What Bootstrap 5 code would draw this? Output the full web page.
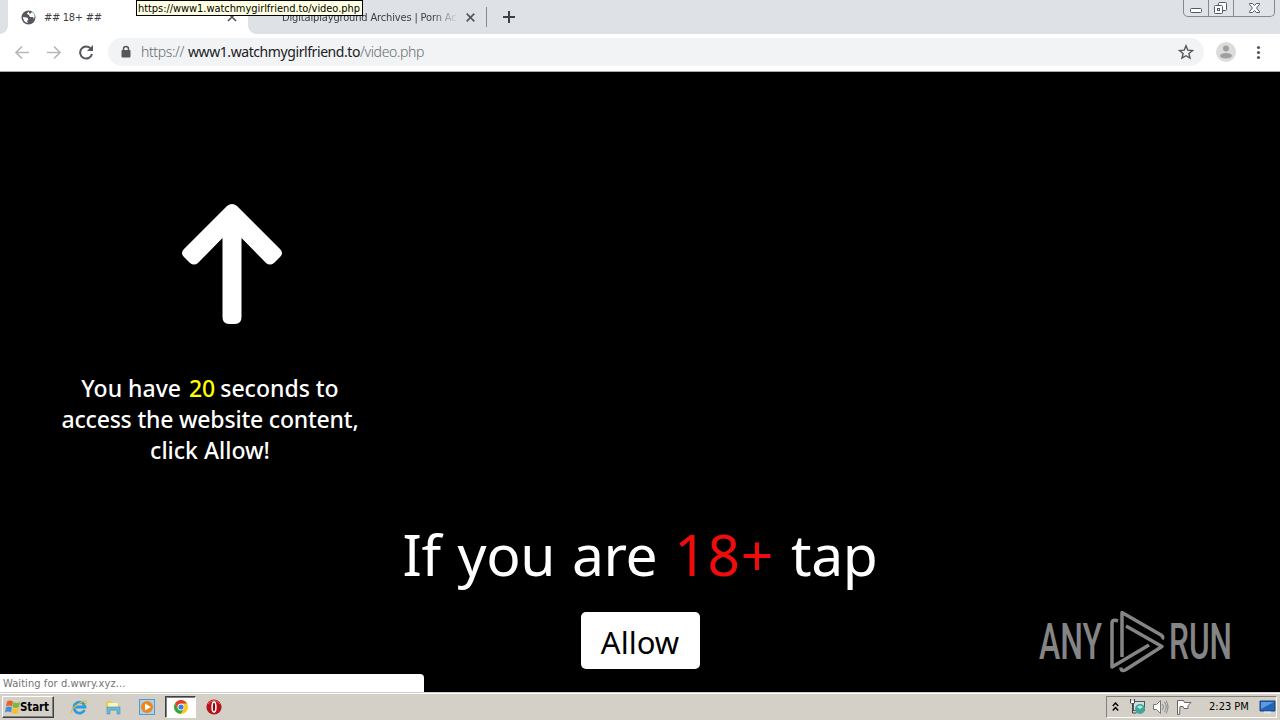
<!DOCTYPE html>
<html lang="en">
<head>
<meta charset="utf-8">
<meta name="viewport" content="width=device-width, initial-scale=1">
<title>## 18+ ##</title>
<link href="https://cdn.jsdelivr.net/npm/bootstrap@5.3.0/dist/css/bootstrap.min.css" rel="stylesheet">
<style>
body{height:720px;overflow:hidden;font-family:"DejaVu Sans Condensed","Noto Sans",sans-serif;font-size:11px;line-height:14px;color:#3c4043}
svg{display:block;flex:none}
.t{white-space:nowrap;display:block;flex:none}
.tabstrip{height:34px;background:#dee1e6}
.tab-on{width:240px;margin-left:8px;background:#fff;padding:0 11px 0 13px}
.tab-on::before,.tab-on::after{content:"";position:absolute;bottom:0;width:8px;height:8px}
.tab-on::before{left:-8px;background:radial-gradient(circle at 0 0,#dee1e6 7.5px,#fff 8px)}
.tab-on::after{right:-8px;background:radial-gradient(circle at 100% 0,#dee1e6 7.5px,#fff 8px)}
.tab-on .t{letter-spacing:-.3px;margin-left:8px;padding-top:1px}
.tab-off{width:239px;padding:0 11px 0 34px;border-right:1px solid #85888d;height:20px;margin-top:7px}
.fade-title{width:176px;overflow:hidden;letter-spacing:-.15px;padding-top:1px;-webkit-mask-image:linear-gradient(90deg,#000 150px,transparent 176px);mask-image:linear-gradient(90deg,#000 150px,transparent 176px)}
.hover-url{left:136px;top:0;width:227px;height:16px;background:#ffffe1;border:1px solid #000;color:#000;padding-left:1px;line-height:15px;letter-spacing:-.06px;overflow:hidden}
.win{right:5px;top:0;width:92px;height:17px;border:1px solid #85898f;border-top:0;border-radius:0 0 5px 5px;background:#e0e3e8}
.win div+div{border-left:1px solid #85898f}
.tools{height:37px;background:#fff;padding:0 0 2px 14px}
.omni{width:1096px;height:28px;border-radius:14px;background:#f1f3f4;padding:0 10px 0 12px;margin-left:14px;font-family:"Noto Sans",sans-serif;font-size:14px;font-weight:300;color:#686c70;letter-spacing:-.37px}
.omni b{font-weight:400;color:#202124;letter-spacing:-.42px;margin-left:4px}
.viewport-pane{height:621px;background:#000;border-top:1px solid #aaa;font-family:"Noto Sans",sans-serif;color:#fff}
.prompt{width:420px;padding-top:132px}
.prompt svg{margin-left:182px}
.prompt p{font-size:23px;line-height:31px;font-weight:500;margin:49px 0 0;text-align:center}
.prompt i{font-style:normal;color:#ff0;margin-left:2px;margin-right:-1px}
.line-b{letter-spacing:-.2px}
.ask{margin-top:51px;font-size:57px;line-height:74px;text-align:center;letter-spacing:-.4px;word-spacing:2.5px}
.ask i{font-style:normal;color:#f00c0c;letter-spacing:.7px}
.allow{width:119px;height:57px;margin:21px auto 0;background:#fff;color:#000;font-size:31px;line-height:1;border-radius:5px;padding:3px 0 0;border:0}
.status{left:0;bottom:0;width:424px;height:18px;background:#fff;color:#737373;border-radius:0 4px 0 0;padding-left:3px;line-height:19px;letter-spacing:.08px;font-family:"DejaVu Sans Condensed",sans-serif}
.anyrun{left:1030px;top:530px}
.taskbar-x{height:28px;background:#d4d0c8;border-top:1px solid #d4d0c8;box-shadow:inset 0 1px #fff;color:#000}
.start{width:52px;height:22px;margin-left:2px;border:1px solid;border-color:#fff #404040 #404040 #fff;box-shadow:inset -1px -1px #808080;font-weight:bold;font-size:11.5px;padding-left:2px}
.run-on{width:31px;height:22px;border:1px solid;border-color:#404040 #fff #fff #404040;background:#fff;box-shadow:inset 1px 1px #808080}
.tray{width:171px;height:22px;margin-right:3px;border:1px solid;border-color:#808080 #fff #fff #808080}
</style>
</head>
<body>
<header class="position-relative">
 <div class="tabstrip d-flex">
  <div class="tab-on position-relative d-flex align-items-center">
   <svg width="15" height="15" viewBox="0 0 15 15"><circle cx="7.5" cy="7.5" r="7" fill="#54575b"/><path d="M2 7q4 0 5 1.500t-1 2.500l1 2Q2 12 2 7M8 1.600q-2 1-2 2.500l2 1 1 2h3l1 2Q15 4 11 2L9 4 8 3z" fill="#fff"/></svg>
   <span class="t">## 18+ ##</span>
   <svg class="ms-auto" width="10" height="10" viewBox="0 0 10 10"><path d="M1 1l8 8M9 1L1 9" stroke="#54575b" stroke-width="1.700"/></svg>
  </div>
  <div class="tab-off d-flex align-items-center">
   <span class="t fade-title">Digitalplayground Archives | Porn Ac</span>
   <svg class="ms-auto" width="9" height="9" viewBox="0 0 9 9"><path d="M.7.700l7.600 7.600M8.300.700L.7 8.300" stroke="#54575b" stroke-width="1.700"/></svg>
  </div>
  <svg class="ms-3 align-self-center" width="12" height="12" viewBox="0 0 12 12"><path d="M6 0v12M0 6h12" stroke="#3c4043" stroke-width="2"/></svg>
 </div>
 <div class="win position-absolute d-flex">
  <div style="width:25px"><svg width="24" height="16" viewBox="0 0 24 16"><rect x="6.500" y="8.500" width="11" height="4" rx="1" fill="#fff" stroke="#555962"/></svg></div>
  <div style="width:25px"><svg width="24" height="16" viewBox="0 0 24 16"><g fill="#fff" stroke="#555962"><rect x="9.500" y="2.500" width="8" height="8" rx="1"/><rect x="5.500" y="5.500" width="8" height="8" rx="1"/><rect x="8.500" y="8.500" width="2" height="2"/></g></svg></div>
  <div><svg width="40" height="16" viewBox="0 0 40 16"><path d="M15.500 3.500h3l2 2 2-2h3v1L22.500 8l3 3.500v1h-3l-2-2-2 2h-3v-1l3-3.500-3-3.500z" fill="#fff" stroke="#555962"/></svg></div>
 </div>
 <div class="tools d-flex align-items-center">
  <svg width="80" height="16" viewBox="0 0 80 16" fill="none"><path d="M15 8.500H2M8 2.500l-6 6 6 6M33 8.500h13M40 2.500l6 6-6 6" stroke="#b6b8bb" stroke-width="1.700"/><path d="M77 5a6 6 0 1 0 1 5" stroke="#54575b" stroke-width="2"/><path d="M79 1v6h-6z" fill="#54575b"/></svg>
  <div class="omni d-flex align-items-center">
   <svg width="12" height="14" viewBox="0 0 12 14"><path d="M3.500 6V4a2.500 2.500 0 0 1 5 0v2" fill="none" stroke="#54575b" stroke-width="1.500"/><rect x="1.500" y="5" width="9" height="7.500" rx="1" fill="#54575b"/></svg>
   <span class="t" style="margin-left:9px">https://<b>www1.watchmygirlfriend.to</b>/video.php</span>
   <svg class="ms-auto" width="16" height="16" viewBox="0 0 16 16"><path d="M8 1.800l1.800 4.300 4.700.4-3.600 3 1.100 4.600L8 11.700 4 14.100l1.100-4.600-3.600-3 4.700-.4z" fill="none" stroke="#54575b" stroke-width="1.400"/></svg>
  </div>
  <svg style="margin-left:12px" width="20" height="20" viewBox="0 0 20 20"><circle cx="10" cy="10" r="10" fill="#dcdcdc"/><circle cx="10" cy="6.500" r="3" fill="#a0a0a0"/><ellipse cx="10" cy="13.700" rx="6" ry="2.800" fill="#a0a0a0"/></svg>
  <svg style="margin-left:20px" width="5" height="16" viewBox="0 0 5 16" fill="#54575b"><circle cx="2.500" cy="3.500" r="1.600"/><circle cx="2.500" cy="8.500" r="1.600"/><circle cx="2.500" cy="13.500" r="1.600"/></svg>
 </div>
 <div class="hover-url position-absolute t">https://www1.watchmygirlfriend.to/video.php</div>
</header>
<main class="viewport-pane position-relative">
 <section class="prompt">
  <svg width="100" height="120" viewBox="0 0 100 120"><path d="M45 2Q50-2 55 2L98 45Q102 49 98 53L92 59Q88 62 84 59L59.500 34V113Q59.500 120 53 120H47Q40.500 120 40.500 113V34L16 59Q12 62 8 59L2 53Q-2 49 2 45Z" fill="#fff"/></svg>
  <p>You have <i>20</i> seconds to<br><span class="line-b">access the website content,</span><br>click Allow!</p>
 </section>
 <div class="ask">If you are <i>18+</i> tap</div>
 <button class="allow d-block">Allow</button>
 <svg class="anyrun position-absolute" width="210" height="80" viewBox="0 0 210 80"><g fill="#858585" font-family="Roboto,sans-serif" font-size="50" font-weight="500"><text x="9" y="57" textLength="63" lengthAdjust="spacingAndGlyphs">ANY</text><text x="139" y="57" textLength="63" lengthAdjust="spacingAndGlyphs">RUN</text></g><g fill="none" stroke="#858585" stroke-width="3.500" stroke-linejoin="round"><path d="M92 55V10.500L131 33q3 2 1 4"/><path d="M96 24l36 20.500-36 23q-5 3-5-2"/><path d="M88 19q-6-2-6 2v44l37-22"/></g></svg>
 <div class="status position-absolute">Waiting for d.wwry.xyz...</div>
</main>
<footer class="taskbar-x d-flex align-items-center">
 <div class="start d-flex align-items-center">
  <svg width="15" height="16" viewBox="0 0 15 16"><path d="M2 2.500q3-2 6 0L7 7.500q-3-2-6 0z" fill="#e8602c"/><path d="M8.500 3q3 2 6.500 0L14 8q-3 2-6.500 0z" fill="#7db83a"/><path d="M1 8.500q3-2 6 0L6 13.500q-3-2-6 0z" fill="#3f8fd8"/><path d="M7.500 9q3 2 6.500 0l-1 5q-3 2-6.500 0z" fill="#f5c02c"/></svg>
  <span class="t" style="letter-spacing:-.1px">Start</span>
 </div>
 <svg style="margin-left:17px" width="16" height="16" viewBox="0 0 16 16"><path d="M13.500 11A5.500 5.500 0 1 1 14 8H4" fill="none" stroke="#299be0" stroke-width="2.800"/><path d="M1 14q-2-3 5-8t9-4q2 1-1 4" fill="none" stroke="#e7bd37" stroke-width="1.300"/></svg>
 <svg style="margin-left:18px" width="16" height="16" viewBox="0 0 16 16"><path d="M1 2h5l1 2h7v8H1z" fill="#e8c862"/><path d="M3 4h10v5H3z" fill="#fff3b0"/><path d="M2 8h13v7h-3v-4H5v4H2z" fill="#6bb8e8" stroke="#3a8fc4" stroke-width=".6"/></svg>
 <svg style="margin-left:18px" width="16" height="16" viewBox="0 0 16 16"><rect x=".5" y=".5" width="15" height="15" fill="#a9d3ef" stroke="#4d9bd0"/><circle cx="8" cy="8" r="6" fill="#f18516"/><path d="M6 4.500l6 3.500-6 3.500z" fill="#fff"/></svg>
 <div class="run-on d-flex align-items-center justify-content-center" style="margin-left:10px">
  <svg width="14" height="14" viewBox="0 0 14 14"><circle cx="7" cy="7" r="7" fill="#fbc91d"/><path d="M1 3.500A7 7 0 0 1 13 3.500H7A3.500 3.500 0 0 0 4 9z" fill="#e33b2e"/><path d="M1 3.500A7 7 0 0 0 6.500 14L10 9A3.500 3.500 0 0 1 4 9z" fill="#30a450"/><circle cx="7" cy="7" r="3.300" fill="#fff"/><circle cx="7" cy="7" r="2.600" fill="#397fe6"/></svg>
 </div>
 <svg style="margin-left:10px" width="16" height="16" viewBox="0 0 16 16"><circle cx="8" cy="8" r="7.600" fill="#b3151b"/><path d="M2 5Q8-2 14 5" stroke="#e5696c" fill="none"/><ellipse cx="8" cy="8" rx="1.900" ry="5" fill="#8a0c10" stroke="#fff" stroke-width="1.500"/></svg>
 <div class="tray ms-auto d-flex align-items-center">
  <svg style="margin-left:5px" width="7" height="10" viewBox="0 0 7 10"><path d="M.8 4l2.700-3 2.700 3M.8 8.500l2.700-3 2.700 3" fill="none" stroke="#000" stroke-width="1.400"/></svg>
  <svg style="margin-left:10px" width="17" height="16" viewBox="0 0 17 16"><rect x="4.500" y="2.500" width="11" height="9" fill="#cfe2df" stroke="#4d5960"/><circle cx="11" cy="10" r="5" fill="#3fa89a"/><path d="M8 8q3-3 6 0l-3 2z" fill="#b8e6da"/><path d="M1.500 0v4h4V0M3.500 4v10h4" fill="none" stroke="#444"/><path d="M2 2h3v2H2z" fill="#fff"/></svg>
  <svg style="margin-left:6px" width="17" height="16" viewBox="0 0 17 16"><path d="M1.500 5.500h3L8.500 1.500v13l-4-4h-3z" fill="#fff" stroke="#777"/><path d="M10.500 5q2 3 0 6M12.500 3q3.500 5 0 10M14 1.500q4 6.500 0 13" fill="none" stroke="#888"/></svg>
  <svg style="margin-left:7px" width="16" height="16" viewBox="0 0 16 16"><path d="M1.500 1.500h6l1 2h6.500l-3 3 0 3h-4l-1-2H4l-.5 8h-2z" fill="#fff" stroke="#666"/></svg>
  <span class="t" style="margin-left:17px">2:23 PM</span>
  <svg class="ms-auto me-0" width="17" height="14" viewBox="0 0 17 14"><path d="M1 1h15v10H1z" fill="#2364b5" stroke="#17427c"/><path d="M2 2h13L2 9z" fill="#5b9ae0"/><path d="M5 12.500h7" stroke="#dfe5ea" stroke-width="2"/></svg>
 </div>
</footer>
<script src="https://cdn.jsdelivr.net/npm/bootstrap@5.3.0/dist/js/bootstrap.bundle.min.js"></script>
</body>
</html>
